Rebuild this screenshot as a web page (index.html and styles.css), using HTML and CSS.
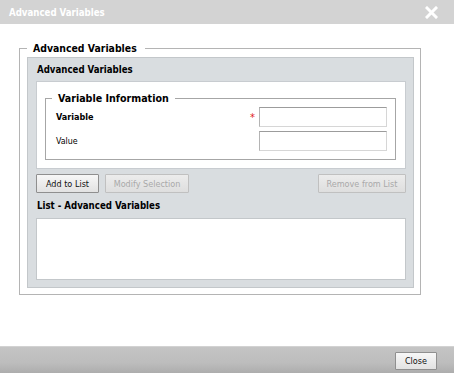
FILE: index.html
```html
<!DOCTYPE html>
<html lang="en">
<head>
  <meta charset="UTF-8" />
  <title>Advanced Variables</title>
  <link rel="stylesheet" href="styles.css">
</head>
<body>
  <div class="dialog">
    <div class="titlebar">
      <span class="title">Advanced Variables</span>
      <button class="close-x" title="Close">
        <svg width="13" height="13" viewBox="0 0 13 13">
          <path d="M2 2 L11 11 M11 2 L2 11" stroke="#fff" stroke-width="3" stroke-linecap="square" />
        </svg>
      </button>
    </div>

    <div class="content">
      <fieldset class="outer">
        <legend>Advanced Variables</legend>
        <div class="panel">
          <div class="panel-header">Advanced Variables</div>

          <div class="white-box">
            <fieldset class="inner">
              <legend>Variable Information</legend>
              <div class="row">
                <label class="bold">Variable</label>
                <span class="required">*</span>
                <input type="text" id="var-name" />
              </div>
              <div class="row">
                <label>Value</label>
                <input type="text" id="var-value" />
              </div>
            </fieldset>
          </div>

          <div class="actions">
            <button class="btn" id="add-btn">Add to List</button>
            <button class="btn" id="modify-btn" disabled>Modify Selection</button>
            <span class="spacer"></span>
            <button class="btn" id="remove-btn" disabled>Remove from List</button>
          </div>

          <div class="list-header">List - Advanced Variables</div>
          <div class="list-box"></div>
        </div>
      </fieldset>
    </div>

    <div class="footer">
      <button class="btn close-btn">Close</button>
    </div>
  </div>
</body>
</html>
```

FILE: styles.css
```css
html, body {
  margin: 0;
  padding: 0;
  height: 100%;
}
body {
  font-family: "DejaVu Sans Condensed", "DejaVu Sans", sans-serif;
  font-stretch: condensed;
  font-size: 9px;
  color: #000;
  background-color: #fff;
}
.dialog {
  display: flex;
  flex-direction: column;
  height: 373px;
}
.titlebar {
  display: flex;
  align-items: center;
  height: 24px;
  padding: 0 16px 0 9px;
  background-color: #d3d3d3;
}
.title {
  flex: 1;
  color: #fff;
  font-weight: bold;
  font-size: 9.6px;
}
.close-x {
  border: none;
  background: none;
  padding: 0;
  width: 13px;
  height: 13px;
  display: flex;
}
.content {
  flex: 1;
  padding: 17px 33px 0 19px;
}
fieldset {
  margin: 0;
  min-width: 0;
}
legend {
  font-weight: bold;
  line-height: 14px;
}
.outer {
  border: 1px solid #b4b4b4;
  padding: 2px 6px 6px 7px;
}
.outer legend {
  font-size: 10.4px;
  padding: 0 8px 0 6px;
}
.panel {
  background-color: #d9dde0;
  border: 1px solid #c3c7ca;
  padding: 0 7px 7px 8px;
}
.panel-header,
.list-header {
  font-weight: bold;
  font-size: 9.6px;
  padding-left: 1px;
}
.panel-header {
  line-height: 23px;
}
.list-header {
  line-height: 25px;
}
.white-box {
  background-color: #fff;
  border: 1px solid #c8ccd0;
  padding: 9px 9px 8px 8px;
}
.inner {
  border: 1px solid #a6a6a6;
  padding: 1px 8px 8px 10px;
}
.inner legend {
  font-size: 10.6px;
  margin-left: -4px;
  padding: 0 6px;
}
.row {
  display: flex;
  align-items: center;
  margin-top: 1px;
}
.row + .row {
  margin-top: 4px;
}
.row label {
  flex: 1;
  font-size: 8.8px;
}
.row label.bold {
  font-weight: bold;
  font-size: 9px;
}
.required {
  color: #e02020;
  font-size: 11px;
  margin-right: 4px;
}
input[type="text"] {
  box-sizing: border-box;
  width: 128px;
  height: 20px;
  margin: 0;
  border: 1px solid #d6d6d6;
  border-top-color: #9c9c9c;
  border-left-color: #b4b4b4;
  background-color: #fff;
}
.actions {
  display: flex;
  gap: 6px;
  margin-top: 5px;
}
.spacer {
  flex: 1;
}
.btn {
  box-sizing: border-box;
  height: 19px;
  padding: 0;
  white-space: nowrap;
  font-family: inherit;
  font-stretch: condensed;
  font-size: 9px;
  color: #111;
  border: 1px solid #8f8f8f;
  border-radius: 1px;
  background: linear-gradient(#f7f7f7, #e2e2e2);
  cursor: pointer;
}
.btn:disabled {
  color: #a9a9a9;
  border-color: #c0c0c0;
  background: linear-gradient(#ececec, #dedede);
  cursor: default;
}
#add-btn { width: 63px; }
#modify-btn { width: 84px; }
#remove-btn { width: 88px; }
.list-box {
  height: 62px;
  box-sizing: border-box;
  background-color: #fff;
  border: 1px solid #c3c7ca;
}
.footer {
  display: flex;
  justify-content: flex-end;
  align-items: center;
  height: 27px;
  padding-right: 17px;
  border-top: 1px solid #d2d2d2;
  box-sizing: border-box;
  background: linear-gradient(#c4c4c4, #bdbdbd 60%, #adadad);
}
.close-btn {
  width: 42px;
  height: 18px;
  margin-top: 1px;
}
```
